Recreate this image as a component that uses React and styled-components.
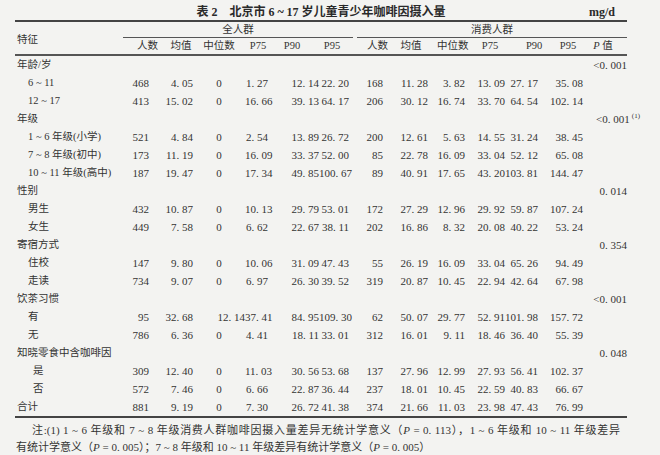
import React from 'react';
import styled, { createGlobalStyle } from 'styled-components';

const GlobalStyle = createGlobalStyle`
  html, body {
    margin: 0;
    background: #f3f3f1;
  }
  body {
    font-family: "Liberation Serif", "Noto Sans CJK SC", serif;
    font-size: 11px;
    color: #333;
  }
`;

// column widths follow the printed table; shift = how far the header label sits off the column centre
const COLUMNS = [
  { w: 108 },
  { w: 26, shift: 7 },
  { w: 44, shift: 10 },
  { w: 52, shift: 0, align: 'center' },
  { w: 23, shift: 1.5 },
  { w: 51, shift: -1.5 },
  { w: 36, shift: -5, pad: 6 },
  { w: 28, shift: 6 },
  { w: 45, shift: 5.5 },
  { w: 37, shift: 4.5 },
  { w: 40, shift: 5 },
  { w: 33, shift: 10.5 },
  { w: 45, shift: 7.5 },
  { w: 44, shift: -2 },
];

const TEMPLATE = COLUMNS.map(c => `${c.w}px`).join(' ');

const SUB_HEADS = ['人数', '均值', '中位数', 'P75', 'P90', 'P95', '人数', '均值', '中位数', 'P75', 'P90', 'P95'];

const ROWS = [
  { label: '年龄/岁', p: '<0.001' },
  { label: '6 ~ 11', indent: 11, values: ['468', '4.05', '0', '1.27', '12.14', '22.20', '168', '11.28', '3.82', '13.09', '27.17', '35.08'] },
  { label: '12 ~ 17', indent: 11, values: ['413', '15.02', '0', '16.66', '39.13', '64.17', '206', '30.12', '16.74', '33.70', '64.54', '102.14'] },
  { label: '年级', p: '<0.001', note: '(1)' },
  { label: '1 ~ 6 年级(小学)', indent: 11, values: ['521', '4.84', '0', '2.54', '13.89', '26.72', '200', '12.61', '5.63', '14.55', '31.24', '38.45'] },
  { label: '7 ~ 8 年级(初中)', indent: 11, values: ['173', '11.19', '0', '16.09', '33.37', '52.00', '85', '22.78', '16.09', '33.04', '52.12', '65.08'] },
  { label: '10 ~ 11 年级(高中)', indent: 11, values: ['187', '19.47', '0', '17.34', '49.85', '100.67', '89', '40.91', '17.65', '43.20', '103.81', '144.47'] },
  { label: '性别', p: '0.014' },
  { label: '男生', indent: 11, values: ['432', '10.87', '0', '10.13', '29.79', '53.01', '172', '27.29', '12.96', '29.92', '59.87', '107.24'] },
  { label: '女生', indent: 11, values: ['449', '7.58', '0', '6.62', '22.67', '38.11', '202', '16.86', '8.32', '20.08', '40.22', '53.24'] },
  { label: '寄宿方式', p: '0.354' },
  { label: '住校', indent: 11, values: ['147', '9.80', '0', '10.06', '31.09', '47.43', '55', '26.19', '16.09', '33.04', '65.26', '94.49'] },
  { label: '走读', indent: 11, values: ['734', '9.07', '0', '6.97', '26.30', '39.52', '319', '20.87', '10.45', '22.94', '42.64', '67.98'] },
  { label: '饮茶习惯', p: '<0.001' },
  { label: '有', indent: 11, values: ['95', '32.68', '12.14', '37.41', '84.95', '109.30', '62', '50.07', '29.77', '52.91', '101.98', '157.72'] },
  { label: '无', indent: 11, values: ['786', '6.36', '0', '4.41', '18.11', '33.01', '312', '16.01', '9.11', '18.46', '36.40', '55.39'] },
  { label: '知晓零食中含咖啡因', p: '0.048' },
  { label: '是', indent: 16, values: ['309', '12.40', '0', '11.03', '30.56', '53.68', '137', '27.96', '12.99', '27.93', '56.41', '102.37'] },
  { label: '否', indent: 16, values: ['572', '7.46', '0', '6.66', '22.87', '36.44', '237', '18.01', '10.45', '22.59', '40.83', '66.67'] },
  { label: '合计', values: ['881', '9.19', '0', '7.30', '26.72', '41.38', '374', '21.66', '11.03', '23.98', '47.43', '76.99'] },
];

// the journal sets a gap after the decimal point
const fmt = v => v.replace('.', '. ');

const Sheet = styled.div`
  width: 612px;
  padding: 4px 33px 0 15px;
`;

const Caption = styled.div`
  display: grid;
  grid-template-columns: 1fr auto 1fr;
  height: 16px;
  line-height: 16px;
  font-size: 12px;
  font-weight: bold;
  color: #2a2a2a;
`;

const Title = styled.div`
  grid-column: 2;
  white-space: pre;
`;

const Unit = styled.div`
  justify-self: end;
  padding-right: 12px;
`;

const Head = styled.div`
  display: grid;
  grid-template-columns: ${TEMPLATE};
  grid-template-rows: 16px 16px;
  border-top: 2px solid #444;
  border-bottom: 2px solid #555;
  font-size: 10.5px;
`;

const HeadLabel = styled.div`
  grid-row: 1 / 3;
  align-self: center;
  padding-left: 2px;
`;

const Group = styled.div`
  grid-column: ${p => p.$from} / ${p => p.$to};
  margin: ${p => (p.$side === 'left' ? '0 2px 0 0' : '0 0 0 2px')};
  border-bottom: 1px solid #555;
  text-align: center;
  line-height: 15px;
`;

const HeadCell = styled.div`
  grid-row: 2;
  text-align: center;
  line-height: 16px;
  white-space: nowrap;
  padding-left: ${p => Math.max(0, p.$shift * 2)}px;
  padding-right: ${p => Math.max(0, -p.$shift * 2)}px;
`;

const Italic = styled.i`
  font-style: italic;
`;

const Body = styled.div`
  border-bottom: 2px solid #444;
`;

const Row = styled.div`
  display: grid;
  grid-template-columns: ${TEMPLATE};
  height: 18px;
  line-height: 18px;
  white-space: nowrap;
`;

const Label = styled.div`
  padding-left: ${p => p.$indent + 2}px;
  font-size: 10.5px;
`;

const Value = styled.div`
  text-align: ${p => p.$align || 'right'};
  padding-right: ${p => p.$pad || 0}px;
`;

const PCell = styled.div`
  grid-column: 14;
  text-align: right;
`;

const Sup = styled.sup`
  font-size: 7px;
  line-height: 0;
  vertical-align: 5px;
  margin-right: -13px;
  padding-left: 2px;
`;

const Notes = styled.div`
  padding: 4px 7px 0 1px;
  line-height: 17px;
`;

const NoteLine = styled.div`
  white-space: nowrap;
  ${p => p.$first && `
    text-indent: 16px;
    text-align: justify;
    text-align-last: justify;
    white-space: normal;
  `}
`;

const P = () => <Italic>P</Italic>;

export default function App() {
  return (
    <>
      <GlobalStyle />
      <Sheet>
        <Caption>
          <Title>表 2　北京市 6 ~ 17 岁儿童青少年咖啡因摄入量</Title>
          <Unit>mg/d</Unit>
        </Caption>

        <Head>
          <HeadLabel>特征</HeadLabel>
          <Group $from={2} $to={8} $side="left">全人群</Group>
          <Group $from={8} $to={15} $side="right">消费人群</Group>
          {SUB_HEADS.map((h, i) => (
            <HeadCell key={i} $shift={COLUMNS[i + 1].shift}>{h}</HeadCell>
          ))}
          <HeadCell $shift={COLUMNS[13].shift}><P /> 值</HeadCell>
        </Head>

        <Body>
          {ROWS.map(row => (
            <Row key={row.label}>
              <Label $indent={row.indent || 0}>{row.label}</Label>
              {row.values && row.values.map((v, i) => {
                const col = COLUMNS[i + 1];
                // zeros in the median column are centred, other medians run right
                const align = col.align === 'center' && v !== '0' ? 'right' : col.align;
                return (
                  <Value key={i} $align={align} $pad={col.pad}>{fmt(v)}</Value>
                );
              })}
              {row.p && (
                <PCell>
                  {fmt(row.p)}
                  {row.note && <Sup>{row.note}</Sup>}
                </PCell>
              )}
            </Row>
          ))}
        </Body>

        <Notes>
          <NoteLine $first>
            注:(1) 1 ~ 6 年级和 7 ~ 8 年级消费人群咖啡因摄入量差异无统计学意义（<P /> = 0. 113），1 ~ 6 年级和 10 ~ 11 年级差异
          </NoteLine>
          <NoteLine>
            有统计学意义（<P /> = 0. 005）；7 ~ 8 年级和 10 ~ 11 年级差异有统计学意义（<P /> = 0. 005）
          </NoteLine>
        </Notes>
      </Sheet>
    </>
  );
}
